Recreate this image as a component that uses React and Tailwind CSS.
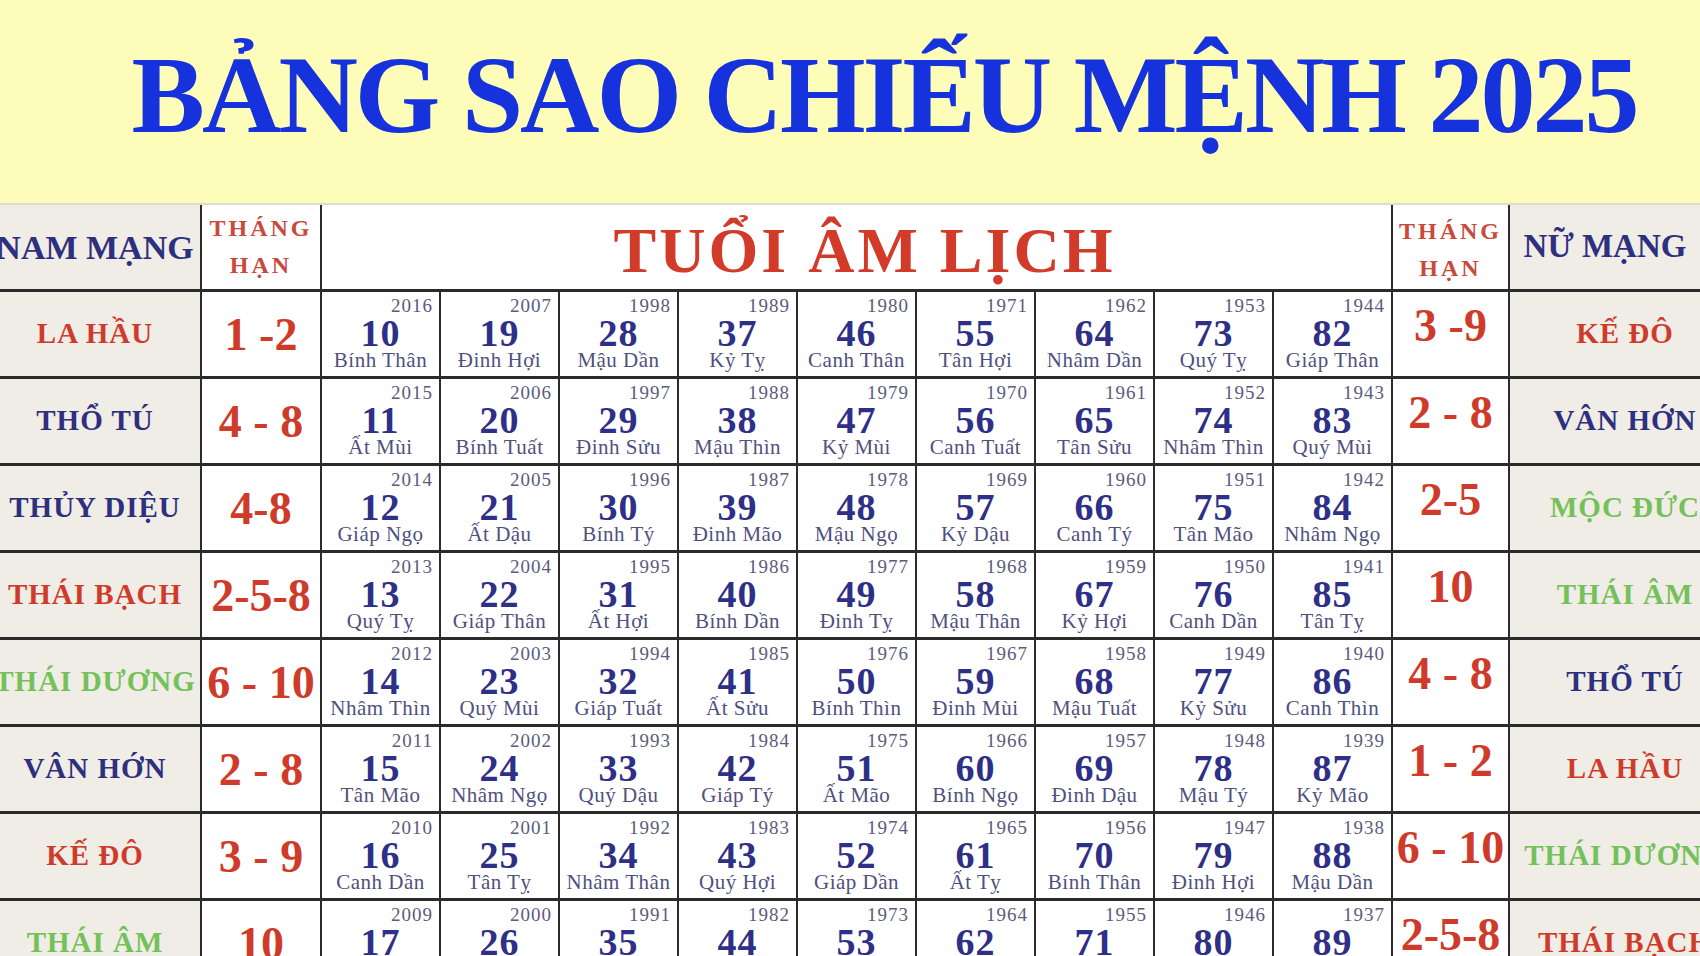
import React from 'react';

const CAN = ['Canh', 'Tân', 'Nhâm', 'Quý', 'Giáp', 'Ất', 'Bính', 'Đinh', 'Mậu', 'Kỷ'];
const CHI = ['Thân', 'Dậu', 'Tuất', 'Hợi', 'Tý', 'Sửu', 'Dần', 'Mão', 'Thìn', 'Tỵ', 'Ngọ', 'Mùi'];

const RED = 'text-[#cf3b2b]';
const NAVY = 'text-[#2d2f7f]';
const GREEN = 'text-[#74c15a]';

const rows = [
  { nam: 'LA HẦU', namColor: RED, hanL: '1 -2', hanR: '3 -9', nu: 'KẾ ĐÔ', nuColor: RED },
  { nam: 'THỔ TÚ', namColor: NAVY, hanL: '4 - 8', hanR: '2 - 8', nu: 'VÂN HỚN', nuColor: NAVY },
  { nam: 'THỦY DIỆU', namColor: NAVY, hanL: '4-8', hanR: '2-5', nu: 'MỘC ĐỨC', nuColor: GREEN },
  { nam: 'THÁI BẠCH', namColor: RED, hanL: '2-5-8', hanR: '10', nu: 'THÁI ÂM', nuColor: GREEN },
  { nam: 'THÁI DƯƠNG', namColor: GREEN, hanL: '6 - 10', hanR: '4 - 8', nu: 'THỔ TÚ', nuColor: NAVY },
  { nam: 'VÂN HỚN', namColor: NAVY, hanL: '2 - 8', hanR: '1 - 2', nu: 'LA HẦU', nuColor: RED },
  { nam: 'KẾ ĐÔ', namColor: RED, hanL: '3 - 9', hanR: '6 - 10', nu: 'THÁI DƯƠNG', nuColor: GREEN },
  { nam: 'THÁI ÂM', namColor: GREEN, hanL: '10', hanR: '2-5-8', nu: 'THÁI BẠCH', nuColor: RED },
];

function YearCell({ age }) {
  const year = 2026 - age;
  const canChi = `${CAN[year % 10]} ${CHI[year % 12]}`;
  return (
    <div className="bg-white h-[84px] flex flex-col overflow-hidden">
      <div className="text-right pr-[6px] pt-[3px] text-[19px] leading-[22px] text-[#5b5b7c] tracking-[1px]">{year}</div>
      <div className="text-center font-bold text-[38px] leading-[32px] text-[#2e2f86] tracking-[1px]">{age}</div>
      <div className="text-center text-[21px] leading-[22px] text-[#50507e] whitespace-nowrap tracking-[0.5px]">{canChi}</div>
    </div>
  );
}

export default function App() {
  return (
    <div className="w-[1700px] h-[956px] overflow-hidden bg-[#fefcb9] font-['Liberation_Serif','Times_New_Roman',serif]">
      <div className="h-[203px] flex items-start justify-center pt-[40px] pl-[68px]">
        <h1 className="text-[110px] leading-[110px] font-bold text-[#1532dc] tracking-[-3px] whitespace-nowrap">
          BẢNG SAO CHIẾU MỆNH 2025
        </h1>
      </div>

      <div className="-ml-[10px] w-[1760px] bg-[#2b2b2b] border-t-[2px] border-[#dcdcd0] grid grid-cols-[210px_118px_repeat(9,117px)_115px_230px] gap-x-[2px] gap-y-[3px]">
        {/* header */}
        <div className="bg-[#f0ece6] h-[84px] flex items-center justify-center">
          <span className={`text-[34px] font-bold ${NAVY} whitespace-nowrap`}>NAM MẠNG</span>
        </div>
        <div className="bg-white h-[84px] flex flex-col items-center justify-center text-[24px] leading-[37px] font-bold text-[#c9493c] tracking-[3px]">
          <span>THÁNG</span>
          <span>HẠN</span>
        </div>
        <div className="col-span-9 bg-white h-[84px] flex items-center justify-center pl-[16px] pt-[8px]">
          <span className="text-[64px] font-bold text-[#d23a2a] tracking-[3px] whitespace-nowrap">TUỔI ÂM LỊCH</span>
        </div>
        <div className="bg-white h-[84px] flex flex-col items-center justify-center pt-[6px] text-[24px] leading-[37px] font-bold text-[#c9493c] tracking-[3px]">
          <span>THÁNG</span>
          <span>HẠN</span>
        </div>
        <div className="bg-[#f0ece6] h-[84px] flex items-center justify-center pr-[40px]">
          <span className={`text-[33px] font-bold ${NAVY} whitespace-nowrap`}>NỮ MẠNG</span>
        </div>

        {rows.map((row, r) => (
          <React.Fragment key={r}>
            <div className="bg-[#f0ece6] h-[84px] flex items-center justify-center">
              <span className={`text-[29px] font-bold tracking-[1px] whitespace-nowrap ${row.namColor}`}>{row.nam}</span>
            </div>
            <div className="bg-white h-[84px] flex items-center justify-center">
              <span className={`text-[46px] font-bold whitespace-nowrap ${RED}`}>{row.hanL}</span>
            </div>
            {Array.from({ length: 9 }, (_, c) => (
              <YearCell key={c} age={10 + r + 9 * c} />
            ))}
            <div className="bg-white h-[84px] flex items-center justify-center pb-[18px]">
              <span className={`text-[46px] font-bold whitespace-nowrap ${RED}`}>{row.hanR}</span>
            </div>
            <div className="bg-[#f0ece6] h-[84px] flex items-center justify-center">
              <span className={`text-[29px] font-bold tracking-[1px] whitespace-nowrap ${row.nuColor}`}>{row.nu}</span>
            </div>
          </React.Fragment>
        ))}
      </div>
    </div>
  );
}
